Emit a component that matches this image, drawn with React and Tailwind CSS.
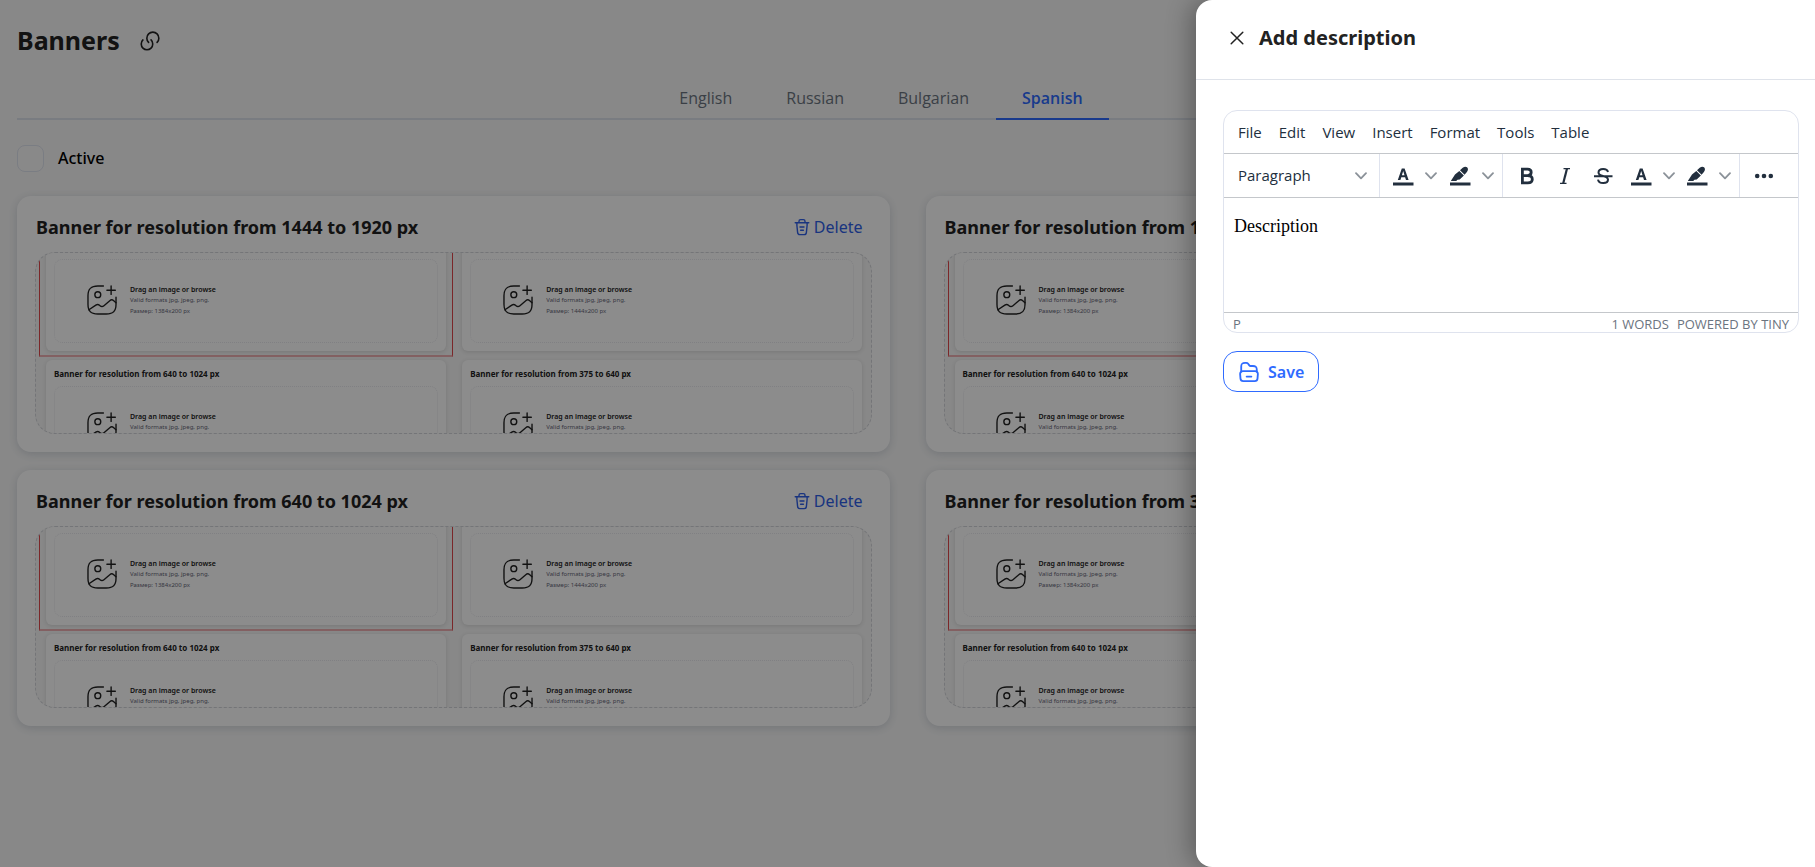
const stroke = { fill: "none", stroke: "currentColor", strokeLinecap: "round", strokeLinejoin: "round" };

function LinkIcon() {
  return (
    <svg viewBox="0 0 24 24" className="size-6" {...stroke} strokeWidth="1.6">
      <path d="M13.06 10.94C15.31 13.19 15.31 16.83 13.06 19.07C10.81 21.31 7.17 21.32 4.93 19.07C2.69 16.82 2.68 13.18 4.93 10.94" />
      <path d="M10.59 13.41C8.25 11.07 8.25 7.27 10.59 4.92C12.93 2.57 16.73 2.58 19.08 4.92C21.43 7.26 21.42 11.06 19.08 13.41" />
    </svg>
  );
}

function TrashIcon() {
  return (
    <svg viewBox="0 0 16 18" className="h-[18px] w-4" {...stroke} strokeWidth="1.4">
      <path d="M1.2 4.8H14.8M5 4.6V3.2Q5 1.6 6.6 1.6H9.4Q11 1.6 11 3.2V4.6" />
      <path d="M2.9 5V7.5L3.6 14.4Q3.8 16.6 5.8 16.6H10.2Q12.2 16.6 12.4 14.4L13.1 7.5V5M6 9H10M6.6 12.2H9.4" />
    </svg>
  );
}

function ImagePlusIcon() {
  return (
    <svg viewBox="1.3 1.3 21.4 21.4" className="size-[30px] shrink-0 text-[#222]" {...stroke} strokeWidth="1">
      <path d="M13 2H9C4 2 2 4 2 9V15C2 20 4 22 9 22H15C20 22 22 20 22 15V10" />
      <circle cx="9" cy="8.2" r="2.1" />
      <path d="M15.5 5H21.5M18.5 8V2" />
      <path d="M2.67 18.95L7.6 15.64C8.39 15.11 9.53 15.17 10.24 15.78L10.57 16.07C11.35 16.74 12.61 16.74 13.39 16.07L17.55 12.5C18.33 11.83 19.59 11.83 20.37 12.5L22 13.9" />
    </svg>
  );
}

function FolderIcon() {
  return (
    <svg viewBox="0 0 24 24" className="size-[22px]" {...stroke} strokeWidth="2">
      <path d="M21.67 14.3L21.27 19.3C21.12 20.83 21 22 18.29 22H5.71C3 22 2.88 20.83 2.73 19.3L2.33 14.3C2.25 13.47 2.51 12.7 2.98 12.11C3.55 11.42 4.38 11 5.31 11H18.69C19.62 11 20.44 11.42 20.98 12.07C21.49 12.69 21.76 13.46 21.67 14.3Z" />
      <path d="M3.5 11.43V6.28C3.5 2.88 4.35 2.03 7.75 2.03H9.02C10.29 2.03 10.58 2.41 11.06 3.05L12.33 4.75C12.65 5.17 12.84 5.43 13.69 5.43H16.24C19.64 5.43 20.49 6.28 20.49 9.68V11.47M9.43 17H14.57" />
    </svg>
  );
}

function Chevron() {
  return (
    <svg viewBox="0 0 12 8" className="h-2 w-3 text-[#8b9299]" {...stroke} strokeWidth="1.8">
      <path d="M1 1.2L6 6.4L11 1.2" />
    </svg>
  );
}

function TextColorIcon() {
  return (
    <svg viewBox="0 0 24 24" className="size-6" fill="currentColor">
      <path d="M2 18.5h20.5v3H2z" />
      <path d="M6.8 16L10.8 4.5h2.8L17.6 16H15l-.9-2.7h-3.8L9.4 16zM10.9 11.3h2.6L12.2 7z" />
    </svg>
  );
}

function HighlightIcon() {
  return (
    <svg viewBox="0 0 24 24" className="size-6" fill="currentColor">
      <path d="M2 18.5h20.5v3H2z" />
      <path d="M2.8 17L7 10.5l4.3-3.6 4.6 4.6-4.2 3.9-2.2.4-1.3 1.2z" />
      <path d="M12 6.2l2.7-2.4c1.8-1.4 3.7-1.2 4.6-.2 1 1.1.9 2.9-.4 4.5l-2.3 2.7z" />
    </svg>
  );
}

function SplitTool({ label, children }) {
  return (
    <div className="flex items-center gap-1">
      <button type="button" aria-label={label} className="flex h-8 w-8 items-center justify-center">{children}</button>
      <button type="button" aria-label={`${label} options`} className="flex h-8 w-4 items-center justify-center"><Chevron /></button>
    </div>
  );
}

function MiniCard({ title, size }) {
  return (
    <div className="rounded-md bg-white px-2 pb-2 shadow-[0_1px_4px_rgba(0,0,0,0.12)]">
      <div className="h-[26px]">
        {title && <h3 className="pt-2 text-[8px] leading-3 font-bold text-[#222]">{title}</h3>}
      </div>
      <div className="flex h-[84px] items-center gap-[13px] rounded-lg border border-dotted border-[#eaeaee] pb-[2px] pl-8">
        <ImagePlusIcon />
        <div className="h-[33px]">
          <p className="text-[7px] leading-[11px] font-semibold text-[#222]">Drag an image or browse</p>
          <p className="text-[6px] leading-[11px] text-[#667]">Valid formats jpg, jpeg, png.</p>
          {size && <p className="text-[6px] leading-[11px] text-[#667]">Размер: {size} px</p>}
        </div>
      </div>
    </div>
  );
}

function Preview() {
  return (
    <div className="flex h-[182px] flex-col overflow-hidden rounded-[20px] border border-dashed border-[#d3d5da] bg-[#f7f7f7] px-[3px]">
      <div className="-mt-5 grid shrink-0 grid-cols-2">
        <div className="border-x border-b-2 border-x-[#e0474c] border-b-[#eeb0b2] px-[6px] pb-1">
          <MiniCard size="1384x200" />
        </div>
        <div className="pr-[6px] pb-1 pl-[9px]">
          <MiniCard size="1444x200" />
        </div>
      </div>
      <div className="grid shrink-0 grid-cols-2 pt-[3px]">
        <div className="px-[7px]">
          <MiniCard title="Banner for resolution from 640 to 1024 px" />
        </div>
        <div className="pr-[6px] pl-[9px]">
          <MiniCard title="Banner for resolution from 375 to 640 px" />
        </div>
      </div>
    </div>
  );
}

function BannerCard({ title }) {
  return (
    <section className="rounded-[14px] bg-white px-[18px] pb-[18px] shadow-[0_2px_10px_rgba(60,80,110,0.2)]">
      <div className="flex h-14 items-center justify-between pt-[6px] pr-[9px] pl-px">
        <h2 className="text-lg font-bold text-[#222]">{title}</h2>
        <button type="button" className="flex items-center gap-1 text-base text-[#2f5fe8]">
          <TrashIcon />
          Delete
        </button>
      </div>
      <Preview />
    </section>
  );
}

const cards = ["1444 to 1920", "1024 to 1444", "640 to 1024", "375 to 640"];
const menus = ["File", "Edit", "View", "Insert", "Format", "Tools", "Table"];

function Editor() {
  return (
    <div className="overflow-hidden rounded-[14px] border border-[#dfe3ee] font-['Open_Sans',sans-serif] text-[#222f3e]">
      <div className="flex h-[42px] items-center gap-[17px] px-[14px] text-[15px]">
        {menus.map((m) => (
          <button type="button" key={m}>{m}</button>
        ))}
      </div>
      <div className="flex h-[45px] border-y border-[#c4c7cb]">
        <button type="button" className="flex w-[156px] items-center justify-between border-r border-[#dfe3ee] pr-3 pl-[14px] text-[15px]">
          Paragraph
          <Chevron />
        </button>
        <div className="flex w-[123px] items-center justify-between border-r border-[#dfe3ee] pr-[6px] pl-[7px]">
          <SplitTool label="Text color"><TextColorIcon /></SplitTool>
          <SplitTool label="Background color"><HighlightIcon /></SplitTool>
        </div>
        <div className="flex w-[237px] items-center border-r border-[#dfe3ee] pr-[6px] pl-2">
          <button type="button" aria-label="Bold" className="flex h-8 w-[38px] items-center pl-1">
            <svg viewBox="0 0 24 24" className="size-6" fill="none" stroke="currentColor" strokeWidth="2.8">
              <path d="M7.4 5.2H12.5Q16.2 5.2 16.2 8.3T12.5 11.6H7.4M12.5 11.6Q17.3 11.6 17.3 15.2T12.8 18.8H7.4V3.8" />
            </svg>
          </button>
          <button type="button" aria-label="Italic" className="flex h-8 w-[38px] items-center pl-1">
            <svg viewBox="0 0 24 24" className="size-6" fill="none" stroke="currentColor" strokeWidth="1.2">
              <path d="M10.5 4.6H17M7 19.4H13.5" />
              <path d="M14 4.6L10.2 19.4" strokeWidth="2.2" />
            </svg>
          </button>
          <button type="button" aria-label="Strikethrough" className="flex h-8 w-[38px] items-center pl-1">
            <svg viewBox="0 0 24 24" className="size-6" fill="none" stroke="currentColor" strokeWidth="2">
              <path d="M17 8Q16.2 5 12.2 5Q7.5 5 7.5 8.5Q7.5 11 12 12T17 15.5Q17 19 12.3 19Q7.5 19 7 15.6M3 12.2H21.5" />
            </svg>
          </button>
          <div className="flex gap-1">
            <SplitTool label="Text color"><TextColorIcon /></SplitTool>
            <SplitTool label="Background color"><HighlightIcon /></SplitTool>
          </div>
        </div>
        <button type="button" aria-label="More" className="ml-3 flex items-center">
          <svg viewBox="0 0 24 24" className="size-6" fill="currentColor">
            <circle cx="5.2" cy="12" r="2.3" /><circle cx="12" cy="12" r="2.3" /><circle cx="18.8" cy="12" r="2.3" />
          </svg>
        </button>
      </div>
      <textarea
        aria-label="Description"
        defaultValue="Description"
        className="block h-[114px] w-full resize-none px-[10px] pt-4 font-['Liberation_Serif',serif] text-lg leading-6 text-black outline-none"
      />
      <div className="flex h-5 items-center justify-between border-t border-[#c4c7cb] px-[9px] pt-[2px] text-[13px] leading-4 text-[#6b7480]">
        <span>P</span>
        <span className="flex gap-2">
          <span>1 WORDS</span>
          <a href="#tiny">POWERED BY TINY</a>
        </span>
      </div>
    </div>
  );
}

export default function App() {
  return (
    <div className="relative min-h-screen overflow-hidden bg-[#f8f8f8] font-['Noto_Sans',sans-serif] text-[#222]">
      <main className="px-[17px]">
        <header className="flex h-[82px] items-center gap-[18px]">
          <h1 className="text-[25px] font-bold">Banners</h1>
          <a href="#link" aria-label="Copy link"><LinkIcon /></a>
        </header>
        <nav className="flex h-[38px] justify-center border-b-2 border-[#dde2ec] pr-[54px] font-['Open_Sans',sans-serif] text-base text-[#6b7480]">
          {["English", "Russian", "Bulgarian"].map((t) => (
            <button type="button" key={t} className="-mb-[2px] px-[27px] pb-[6px]">{t}</button>
          ))}
          <button type="button" className="-mb-[2px] border-b-2 border-[#2f6bff] px-[26px] pb-1 font-semibold text-[#2f6bff]">Spanish</button>
        </nav>
        <label className="flex h-[76px] items-center gap-[14px] text-base font-medium text-black">
          <input type="checkbox" className="size-[27px] appearance-none rounded-lg border border-[#dfe3ee] bg-[#fafafa]" />
          Active
        </label>
        <div className="grid grid-cols-2 gap-x-9 gap-y-[18px]">
          {cards.map((c) => (
            <BannerCard key={c} title={`Banner for resolution from ${c} px`} />
          ))}
        </div>
      </main>
      <div className="absolute inset-0 bg-black/45" />
      <aside className="absolute inset-y-0 right-0 w-[619px] rounded-l-2xl bg-white shadow-[-6px_0_24px_rgba(0,0,0,0.3)]">
        <header className="flex h-20 items-center gap-[15px] border-b border-[#dfe3ea] pb-1 pl-[34px]">
          <button type="button" aria-label="Close">
            <svg viewBox="0 0 14 14" className="size-[14px]" {...stroke} strokeWidth="1.5">
              <path d="M1.2 1.2L12.8 12.8M12.8 1.2L1.2 12.8" />
            </svg>
          </button>
          <h2 className="text-xl font-bold">Add description</h2>
        </header>
        <div className="pt-[30px] pr-4 pl-[27px]">
          <Editor />
          <button type="button" className="mt-[18px] flex h-[41px] items-center gap-2 rounded-[14px] border border-[#2f6bff] px-[14px] text-base font-semibold text-[#2f6bff]">
            <FolderIcon />
            Save
          </button>
        </div>
      </aside>
    </div>
  );
}
